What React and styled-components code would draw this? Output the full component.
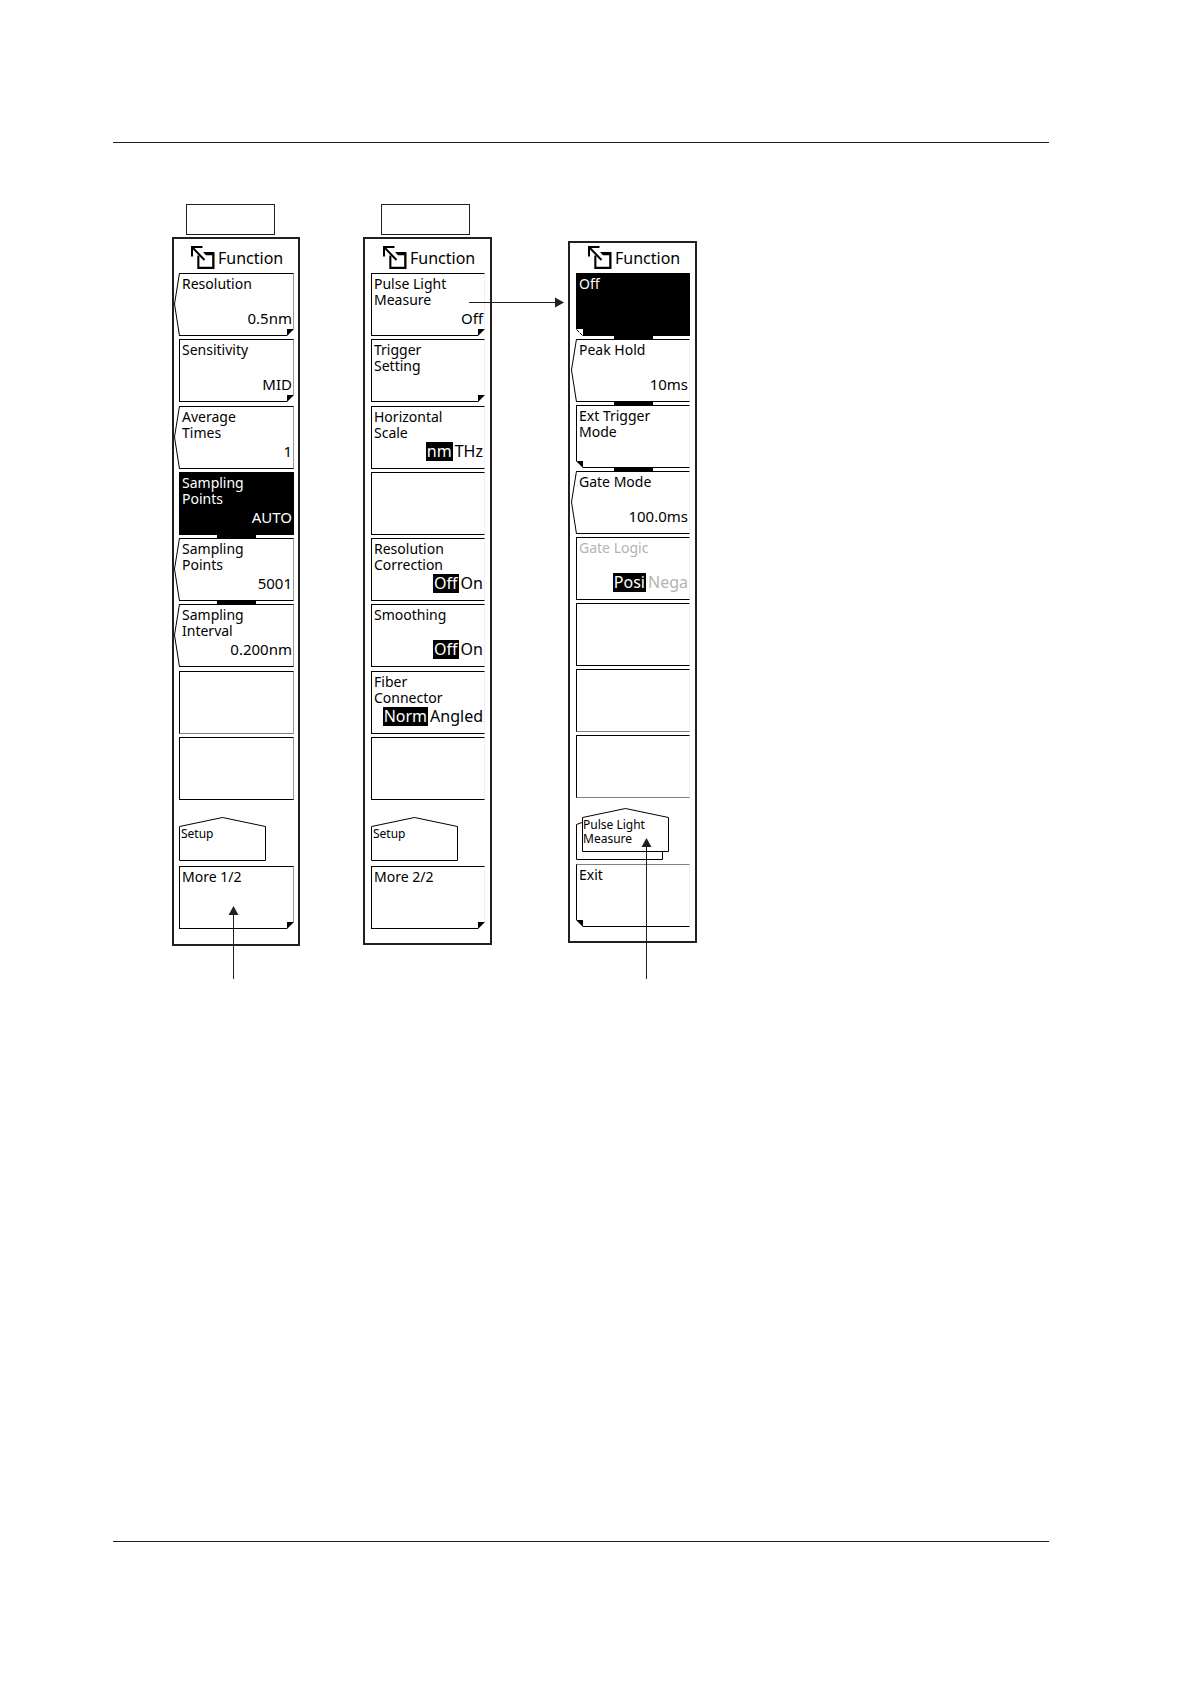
import styled, { createGlobalStyle, css } from 'styled-components';

const INK = '#231f20';

const GlobalStyle = createGlobalStyle`
  * {
    box-sizing: border-box;
  }

  body {
    margin: 0;
    background: #fff;
    color: #000;
    font-family: 'Noto Sans', 'Open Sans', sans-serif;
  }
`;

const setupKeys = [
  { label: ['Resolution'], value: '0.5nm', notch: true, fold: 'right' },
  { label: ['Sensitivity'], value: 'MID', fold: 'right' },
  { label: ['Average', 'Times'], value: '1', notch: true },
  { label: ['Sampling', 'Points'], value: 'AUTO', active: true, linked: true },
  { label: ['Sampling', 'Points'], value: '5001', notch: true, linked: true },
  { label: ['Sampling', 'Interval'], value: '0.200nm', notch: true },
  { softBottom: true },
  {},
];

const setupMoreKeys = [
  { label: ['Pulse Light', 'Measure'], value: 'Off', fold: 'right' },
  { label: ['Trigger', 'Setting'], fold: 'right' },
  { label: ['Horizontal', 'Scale'], options: ['nm', 'THz'] },
  {},
  { label: ['Resolution', 'Correction'], options: ['Off', 'On'] },
  { label: ['Smoothing'], options: ['Off', 'On'] },
  { label: ['Fiber', 'Connector'], options: ['Norm', 'Angled'] },
  {},
];

const pulseLightKeys = [
  { label: ['Off'], active: true, fold: 'left', linked: true },
  { label: ['Peak Hold'], value: '10ms', notch: true, linked: true },
  { label: ['Ext Trigger', 'Mode'], fold: 'left', linked: true },
  { label: ['Gate Mode'], value: '100.0ms', notch: true },
  { label: ['Gate Logic'], options: ['Posi', 'Nega'], disabled: true },
  {},
  { softBottom: true },
  { softBottom: true },
];

const FunctionIcon = () => (
  <svg width="24" height="23" viewBox="0 0 24 23" aria-hidden="true">
    <path d="M0 0H11.5V2H2V10.5H0Z" />
    <path d="M1 1L13.5 14" stroke="#000" strokeWidth="2" />
    <path d="M12 6H23.5V23H6.3V9.5H8.4V20.8H21.2V9.3H15Z" />
  </svg>
);

const Fold = ({ side, active }) => (
  <FoldMark $side={side} viewBox="0 0 7 7" aria-hidden="true">
    <rect width="7" height="7" fill="#fff" />
    {active ? (
      <path d="M0.5 0.5L6.5 6.5" stroke="#000" strokeDasharray="4 1" />
    ) : (
      <path d={side === 'right' ? 'M0 0H7L0 7Z' : 'M0 0H7V7Z'} />
    )}
  </FoldMark>
);

const SoftKey = ({ item, soft }) => {
  const { label, value, options, notch, fold, active, linked, disabled, softBottom, softTop } = item;

  return (
    <Key
      as={label ? 'button' : 'div'}
      disabled={label ? disabled : undefined}
      $soft={soft}
      $notch={notch}
      $active={active}
      $softBottom={softBottom}
      $softTop={softTop}
    >
      {label && (
        <KeyLabel>
          {label.map((line) => (
            <span key={line}>{line}</span>
          ))}
        </KeyLabel>
      )}
      {value && <KeyValue>{value}</KeyValue>}
      {options && (
        <KeyOptions>
          <Selected>{options[0]}</Selected>
          <span>{options[1]}</span>
        </KeyOptions>
      )}
      {notch && (
        <Notch viewBox="0 0 7 63" aria-hidden="true">
          <polyline points="5.5,0 0.5,31 5.5,63" fill="none" stroke="#000" />
        </Notch>
      )}
      {fold && <Fold side={fold} active={active} />}
      {linked && <Link />}
    </Key>
  );
};

const MenuPanel = ({ keys, spread, soft, compact, page, last, children }) => (
  <Panel $soft={soft}>
    <PanelHead $compact={compact}>
      <FunctionIcon />
      <span>Function</span>
    </PanelHead>
    <KeyList $spread={spread}>
      {keys.map((item, i) => (
        <SoftKey key={i} item={item} soft={soft} />
      ))}
    </KeyList>
    {page}
    <SoftKey item={last} soft={soft} />
    {children}
  </Panel>
);

const SetupPage = () => (
  <PageTab>
    <svg width="87" height="44" viewBox="0 0 87 44" aria-hidden="true">
      <path d="M0.5 43.5V9.5L43.5 0.5L86.5 9.5V43.5Z" fill="#fff" stroke="#000" />
    </svg>
    <PageName>Setup</PageName>
  </PageTab>
);

const PulsePage = () => (
  <PageTab $stacked>
    <svg width="93" height="52" viewBox="0 0 93 52" aria-hidden="true">
      <path d="M6 14.5L0.5 16.5V51.5H86.5V44" fill="none" stroke="#000" />
      <path d="M6.5 43.5V9.5L49.5 0.5L92.5 9.5V43.5Z" fill="#fff" stroke="#000" />
    </svg>
    <PageName $stacked>
      <span>Pulse Light</span>
      <span>Measure</span>
    </PageName>
  </PageTab>
);

const UpArrow = ({ left, top, length }) => (
  <Arrow $left={left} $top={top} width="11" height={length} aria-hidden="true">
    <path d={`M5.5 8V${length}`} stroke={INK} />
    <path d="M5.5 0L10.5 9H0.5Z" fill={INK} />
  </Arrow>
);

const RightArrow = ({ left, top, length }) => (
  <Arrow $left={left} $top={top} width={length} height="11" aria-hidden="true">
    <path d={`M0 5.5H${length - 8}`} stroke={INK} />
    <path d={`M${length} 5.5L${length - 9} 0.5V10.5Z`} fill={INK} />
  </Arrow>
);

const App = () => {
  return (
    <>
      <GlobalStyle />
      <Page>
        <Rule />
        <Menus>
          <Column>
            <HardKey $indent={14} />
            <MenuPanel
              keys={setupKeys}
              spread={527}
              page={<SetupPage />}
              last={{ label: ['More 1/2'], fold: 'right' }}
            >
              <UpArrow left={54} top={667} length={73} />
            </MenuPanel>
          </Column>
          <Column>
            <HardKey $indent={18} />
            <MenuPanel
              keys={setupMoreKeys}
              spread={527}
              soft
              page={<SetupPage />}
              last={{ label: ['More 2/2'], fold: 'right' }}
            >
              <RightArrow left={104} top={58} length={95} />
            </MenuPanel>
          </Column>
          <Column $sub>
            <MenuPanel
              keys={pulseLightKeys}
              spread={525}
              soft
              compact
              page={<PulsePage />}
              last={{ label: ['Exit'], fold: 'left', softTop: true }}
            >
              <UpArrow left={71} top={595} length={141} />
            </MenuPanel>
          </Column>
        </Menus>
        <Rule />
      </Page>
    </>
  );
};

export default App;

const Page = styled.main`
  display: flex;
  flex-direction: column;
  min-height: 100vh;
  padding: 142px 142px 142px 113px;
`;

const Rule = styled.hr`
  width: 100%;
  height: 1px;
  margin: 0;
  border: none;
  background: ${INK};
`;

const Menus = styled.section`
  display: flex;
  flex: 1;
  align-items: flex-start;
  gap: 63px;
  padding: 61px 0 61px 59px;
`;

const Column = styled.div`
  display: flex;
  flex-direction: column;
  gap: 2px;
  ${({ $sub }) => $sub && 'margin: 37px 0 0 13px;'}
`;

const HardKey = styled.div`
  width: 89px;
  height: 31px;
  margin-left: ${({ $indent }) => $indent}px;
  border: 1px solid ${INK};
`;

const Panel = styled.div`
  position: relative;
  padding: ${({ $soft }) => ($soft ? '0 5px 14px 6px' : '0 4px 15px 5px')};
  border: 2px solid ${INK};
  background: #fff;
`;

const PanelHead = styled.div`
  display: flex;
  align-items: flex-end;
  gap: 3px;
  padding: ${({ $compact }) => ($compact ? 3 : 7)}px 0 4px 12px;
  font-size: 16px;
  line-height: 22px;
`;

const KeyList = styled.div`
  display: grid;
  align-content: space-between;
  height: ${({ $spread }) => $spread}px;
`;

const Key = styled.button`
  position: relative;
  display: flex;
  flex-direction: column;
  justify-content: space-between;
  width: ${({ $soft }) => ($soft ? 114 : 115)}px;
  height: 63px;
  padding: 2px 1px 7px 2px;
  border: 1px solid #000;
  border-right-color: ${({ $soft }) => ($soft ? '#eee' : '#999')};
  background: #fff;
  color: #000;
  font-family: inherit;
  text-align: left;

  &:disabled {
    color: #b3b3b3;
  }

  ${({ $notch }) => $notch && 'border-left-color: transparent;'}
  ${({ $softBottom }) => $softBottom && 'border-bottom-color: #808080;'}
  ${({ $softTop }) => $softTop && 'border-top-color: #808080;'}
  ${({ $active }) =>
    $active &&
    css`
      border-color: #000;
      background: #000;
      color: #fff;
    `}
`;

const KeyLabel = styled.span`
  display: flex;
  flex-direction: column;
  font-size: 14px;
  line-height: 16px;
`;

const KeyValue = styled.span`
  display: flex;
  justify-content: flex-end;
  font-size: 15px;
  line-height: 19px;
`;

const KeyOptions = styled(KeyValue)`
  gap: 2px;
  font-size: 16px;
`;

const Selected = styled.span`
  padding: 0 1px;
  background: #000;
  color: #fff;
`;

const Notch = styled.svg`
  position: absolute;
  top: -1px;
  left: -6px;
  width: 7px;
  height: 63px;
`;

const FoldMark = styled.svg`
  position: absolute;
  bottom: -1px;
  ${({ $side }) => $side}: -1px;
  width: 7px;
  height: 7px;
`;

/* bar that ties a key to the one under it */
const Link = styled.span`
  position: absolute;
  top: 61px;
  left: 37px;
  width: 39px;
  height: 5px;
  background: #000;
`;

const PageTab = styled.div`
  display: grid;
  justify-items: start;
  margin: ${({ $stacked }) => ($stacked ? '10px 0 4px' : '17px 0 5px')};

  > * {
    grid-area: 1 / 1;
  }
`;

const PageName = styled.span`
  display: flex;
  flex-direction: column;
  padding: 10px 0 0 ${({ $stacked }) => ($stacked ? 7 : 2)}px;
  font-size: 12px;
  line-height: 14px;
`;

const Arrow = styled.svg`
  position: absolute;
  top: ${({ $top }) => $top}px;
  left: ${({ $left }) => $left}px;
`;
